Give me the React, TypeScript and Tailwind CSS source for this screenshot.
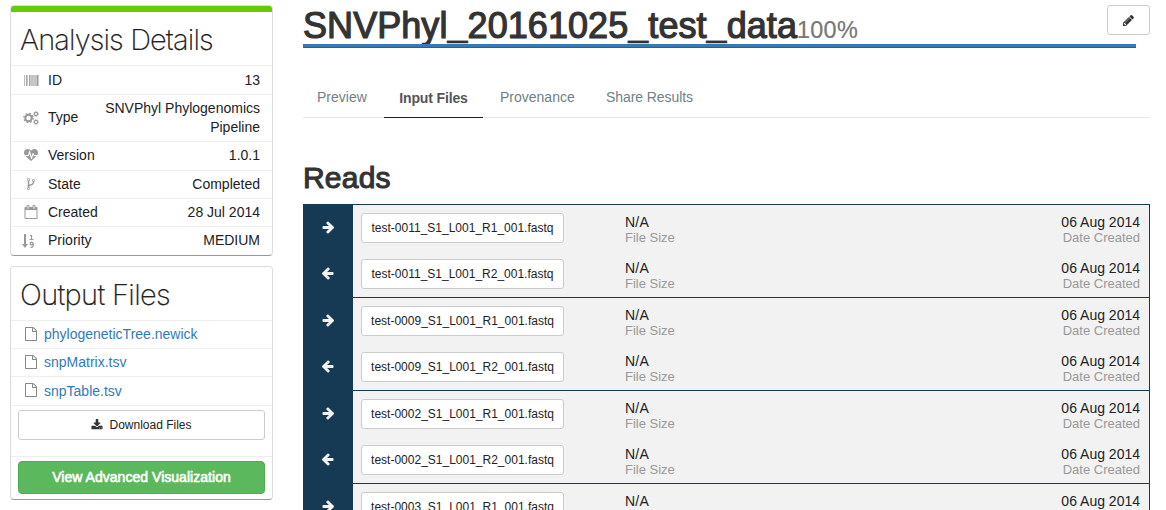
import React from "react";

const ICONS = {
  right:
    "M1664 960q0 54-37 91l-651 651q-39 37-91 37-51 0-90-37l-75-75q-38-38-38-91t38-91l293-293h-704q-52 0-84.500-37.500t-32.500-90.500v-128q0-53 32.500-90.500t84.500-37.500h704l-293-294q-38-36-38-90t38-90l75-75q38-38 90-38 53 0 91 38l651 651q37 35 37 90z",
  heart:
    "M1280 1024h305q-5 6-10 10.500t-9 7.500l-3 4-623 600q-18 18-44 18t-44-18l-624-602q-5-2-21-20h369q22 0 39.500-13.500t22.500-34.500l70-281 190 667q6 20 23 33t39 13q21 0 38-13t23-33l146-485 56 112q18 35 57 35zm512-428q0 145-103 300h-369l-111-221q-8-17-25.500-27t-36.500-8q-45 5-56 46l-129 430-196-686q-6-20-23.500-33t-39.500-13-39 13.500-22 34.500l-116 464h-423q-103-155-103-300 0-220 127-344t351-124q62 0 126.500 21.500t120 58 95.500 68.500 76 68q36-36 76-68t95.500-68.500 120-58 126.500-21.500q224 0 351 124t127 344z",
  fork:
    "M672 1472q0-40-28-68t-68-28-68 28-28 68 28 68 68 28 68-28 28-68zm0-1152q0-40-28-68t-68-28-68 28-28 68 28 68 68 28 68-28 28-68zm640 128q0-40-28-68t-68-28-68 28-28 68 28 68 68 28 68-28 28-68zm96 0q0 52-26 96.500t-70 69.500q-2 287-226 414-67 38-203 81-128 40-169.500 71t-41.500 100v26q44 25 70 69.500t26 96.500q0 80-56 136t-136 56-136-56-56-136q0-52 26-96.500t70-69.500v-820q-44-25-70-69.500t-26-96.500q0-80 56-136t136-56 136 56 56 136q0 52-26 96.500t-70 69.500v497q54-26 154-57 55-17 87.500-29.500t70.500-31 59-39.500 40.500-51 28-69.500 8.500-91.500q-44-25-70-69.500t-26-96.500q0-80 56-136t136-56 136 56 56 136z",
  calendar:
    "M192 1664h1408v-1024h-1408v1024zm384-1216v-288q0-14-9-23t-23-9h-64q-14 0-23 9t-9 23v288q0 14 9 23t23 9h64q14 0 23-9t9-23zm768 0v-288q0-14-9-23t-23-9h-64q-14 0-23 9t-9 23v288q0 14 9 23t23 9h64q14 0 23-9t9-23zm384-64v1280q0 52-38 90t-90 38h-1408q-52 0-90-38t-38-90v-1280q0-52 38-90t90-38h128v-96q0-66 47-113t113-47h64q66 0 113 47t47 113v96h384v-96q0-66 47-113t113-47h64q66 0 113 47t47 113v96h128q52 0 90 38t38 90z",
  file:
    "M1596 380q28 28 48 76t20 88v1152q0 40-28 68t-68 28h-1344q-40 0-68-28t-28-68v-1600q0-40 28-68t68-28h896q40 0 88 20t76 48zm-444-244v376h376q-10-29-22-41l-313-313q-12-12-41-22zm384 1528v-1024h-416q-40 0-68-28t-28-68v-416h-768v1536h1280z",
  download:
    "M1344 1344q0-26-19-45t-45-19-45 19-19 45 19 45 45 19 45-19 19-45zm256 0q0-26-19-45t-45-19-45 19-19 45 19 45 45 19 45-19 19-45zm128-224v320q0 40-28 68t-68 28h-1472q-40 0-68-28t-28-68v-320q0-40 28-68t68-28h465l135 136q58 56 136 56t136-56l136-136h464q40 0 68 28t28 68zm-325-569q17 41-14 70l-448 448q-18 19-45 19t-45-19l-448-448q-31-29-14-70 17-39 59-39h256v-448q0-26 19-45t45-19h256q26 0 45 19t19 45v448h256q42 0 59 39z",
  pencil:
    "M491 1536l91-91-235-235-91 91v107h128v128h107zm523-928q0-22-22-22-10 0-17 7l-542 542q-7 7-7 17 0 22 22 22 10 0 17-7l542-542q7-7 7-17zm-54-192l416 416-832 832h-416v-416zm683 96q0 53-37 90l-166 166-416-416 166-165q36-38 90-38 53 0 91 38l235 234q37 39 37 91z",
};

function Icon({ name, className }: { name: keyof typeof ICONS; className: string }) {
  return (
    <svg viewBox="0 0 1792 1792" fill="currentColor" className={className}>
      <path d={ICONS[name]} />
    </svg>
  );
}

function Barcode() {
  return (
    <svg width="16" height="11" viewBox="0 0 16 11">
      <rect x="1" width="1" height="11" fill="#bbb" />
      <rect x="3" width="1" height="11" fill="#aaa" />
      <rect x="4" width="1" height="11" fill="#ccc" />
      <rect x="6" width="1" height="11" fill="#aaa" />
      <rect x="7" width="7" height="11" fill="#c6c6c6" />
      <rect x="14" width="1" height="11" fill="#999" />
      <rect x="15" width="1" height="11" fill="#ccc" />
    </svg>
  );
}

function Gears() {
  return (
    <svg width="16" height="14" viewBox="0 0 16 14" fill="none" stroke="currentColor" className="mb-px">
      <circle cx="5.500" cy="7" r="3.200" strokeWidth="2" />
      <circle cx="5.500" cy="7" r="4.600" strokeWidth="1.400" strokeDasharray="1.800 1.813" />
      <circle cx="13" cy="3" r="1.600" strokeWidth="1.100" />
      <circle cx="13" cy="3" r="2.400" strokeWidth="0.900" strokeDasharray="0.900 0.985" />
      <circle cx="13" cy="11" r="1.600" strokeWidth="1.100" />
      <circle cx="13" cy="11" r="2.400" strokeWidth="0.900" strokeDasharray="0.900 0.985" />
    </svg>
  );
}

function SortNumeric() {
  return (
    <svg width="16" height="14" viewBox="0 0 16 14" fill="none" stroke="currentColor" className="mr-[2px] shrink-0">
      <path d="M3 0v12" strokeWidth="2" />
      <path d="M0 10h6l-3 4z" fill="currentColor" stroke="none" />
      <path d="M8 1.500h1.500v4M7.500 5.500h4" strokeWidth="1.200" />
      <circle cx="9.600" cy="9.500" r="1.400" strokeWidth="1.200" />
      <path d="M11.200 9.500v2q0 2-2.700 2" strokeWidth="1.200" />
    </svg>
  );
}

const details = [
  { label: "ID", value: "13", h: "h-[29px]", icon: <Barcode /> },
  { label: "Type", value: "SNVPhyl Phylogenomics Pipeline", h: "h-[47px]", icon: <Gears /> },
  { label: "Version", value: "1.0.1", h: "h-[29px] pb-[2px]", icon: <Icon name="heart" className="size-[14px]" /> },
  { label: "State", value: "Completed", h: "h-[28px]", icon: <Icon name="fork" className="mb-px size-[14px]" /> },
  { label: "Created", value: "28 Jul 2014", h: "h-[28px]", icon: <Icon name="calendar" className="mb-px size-[14px]" /> },
  { label: "Priority", value: "MEDIUM", h: "h-[28px]", icon: <SortNumeric /> },
];

const files = [
  { name: "phylogeneticTree.newick", h: "h-[28px]" },
  { name: "snpMatrix.tsv", h: "h-[28px]" },
  { name: "snpTable.tsv", h: "h-[29px]" },
];

const samples = ["0011", "0009", "0002", "0003"];

function Underscore() {
  return <span className="relative -top-[2px] [-webkit-text-stroke:0.3px_#333]">_</span>;
}

function ReadRow({ sample, dir }: { sample: string; dir: 1 | 2 }) {
  return (
    <div className="flex h-[46px] shrink-0 pt-2">
      <div className="flex w-[202px] shrink-0">
        <button className="h-[30px] w-[203px] shrink-0 rounded-[3px] border border-[#ccc] bg-white text-[12px] whitespace-nowrap">
          {`test-${sample}_S1_L001_R${dir}_001.fastq`}
        </button>
      </div>
      <div className="ml-[62px] flex-1">
        <div className="text-[14px] leading-[18px] tracking-[0.2px]">N/A</div>
        <div className="text-[13px] leading-[14px] text-[#999]">File Size</div>
      </div>
      <div className="text-right">
        <div className="text-[14px] leading-[18px]">06 Aug 2014</div>
        <div className="text-[13px] leading-[14px] text-[#999]">Date Created</div>
      </div>
    </div>
  );
}

export default function App() {
  return (
    <div className="flex h-[510px] w-[1166px] overflow-hidden bg-white pl-[10px] font-['Liberation_Sans',Arial,sans-serif] text-[14px] text-[#222]">
      <aside className="w-[263px] shrink-0 pt-[5px]">
        <section className="h-[251px] overflow-hidden rounded-[4px] border border-[#ddd] border-b-[#999]">
          <div className="h-[6px] bg-[#66cc00]" />
          <h2 className="h-[53px] pl-[9px] font-['Inter',sans-serif] text-[29px] leading-[55px] font-extralight tracking-[-0.88px] text-[#222] [-webkit-text-stroke:0.2px_#222]">
            Analysis Details
          </h2>
          {details.map((d) => (
            <div key={d.label} className={`flex items-center border-t border-[#eee] pr-[12px] pl-[12px] ${d.h}`}>
              <span className="flex w-[16px] shrink-0 justify-center text-[#999]">{d.icon}</span>
              <span className={d.label === "Type" ? "mb-[2px] ml-[9px] flex-1" : "ml-[9px] flex-1"}>{d.label}</span>
              <span className="w-[170px] text-right leading-[19px]">{d.value}</span>
            </div>
          ))}
        </section>

        <section className="mt-[10px] h-[234px] overflow-hidden rounded-[4px] border border-[#ddd] border-b-[#999]">
          <h2 className="h-[53px] pl-[9px] font-['Inter',sans-serif] text-[29px] leading-[55px] font-extralight tracking-[-0.68px] text-[#222] [-webkit-text-stroke:0.2px_#222]">
            Output Files
          </h2>
          {files.map((f) => (
            <div key={f.name} className={`flex items-center border-t border-[#eee] pl-[13px] ${f.h}`}>
              <Icon name="file" className="mb-[2px] size-[14px] text-[#888]" />
              <a className="ml-[6px] text-[#337ab7]">{f.name}</a>
            </div>
          ))}
          <div className="h-[51px] border-t border-[#eee] px-[7px] pt-[4px]">
            <button className="flex h-[30px] w-full items-center justify-center rounded-[3px] border border-[#ccc] text-[12px]">
              <Icon name="download" className="mr-[6px] mb-px size-[12px] text-[#333]" />
              Download Files
            </button>
          </div>
          <div className="border-t border-[#eee] px-[7px] pt-[4px]">
            <button className="block h-[33px] w-full rounded-[4px] border border-[#4cae4c] bg-[#5cb85c] text-[14px] tracking-[0.03px] text-white [-webkit-text-stroke:0.6px_white]">
              View Advanced Visualization
            </button>
          </div>
        </section>
      </aside>

      <main className="ml-[30px] flex w-[847px] shrink-0 flex-col">
        <header className="flex h-[48px] justify-between">
          <div className="w-[833px] shrink-0">
            <h1 className="flex h-[44px] items-baseline text-[36px] leading-[52px] whitespace-nowrap text-[#333]">
              <span className="tracking-[0.06px] [-webkit-text-stroke:1.2px_#333]">
                SNVPhyl<Underscore />20161025<Underscore />test<Underscore />data
              </span>
              <span className="text-[23.4px] tracking-[0.3px] text-[#777] [-webkit-text-stroke:0.2px_#777]">100%</span>
            </h1>
            <div className="relative h-[4px] border-b border-[#286090] bg-[#337ab7]" />
          </div>
          <button className="mt-[5px] -ml-[29px] flex h-[30px] w-[43px] shrink-0 items-center justify-center rounded-[3px] border border-[#ccc] bg-white">
            <Icon name="pencil" className="mr-px size-[13px] text-[#333]" />
          </button>
        </header>

        <nav className="mt-[29px] flex h-[41px] shrink-0 border-b border-[#e7e7e7] leading-[40px] text-[#6f7f86]">
          <a className="w-[81px] pl-[14px]">Preview</a>
          <a className="h-[41px] w-[99px] border-b border-[#222] text-center leading-[42px] font-bold tracking-[-0.15px] text-[#555]">
            Input Files
          </a>
          <a className="ml-[17px] w-[106px]">Provenance</a>
          <a className="tracking-[-0.08px]">Share Results</a>
        </nav>

        <h2 className="mt-[40px] h-[46px] shrink-0 text-[30px] leading-[40px] tracking-[0.2px] text-[#333] [-webkit-text-stroke:1.1px_#333]">
          Reads
        </h2>

        <div className="border-r border-[#163a54]">
          {samples.map((s) => (
            <div key={s} className="flex h-[93px]">
              <div className="flex w-[50px] flex-col items-center bg-[#163a54] text-[#f2f2f2]">
                <Icon name="right" className="mt-[16px] mr-px size-[14px]" />
                <Icon name="right" className="mt-[33px] size-[14px] rotate-180" />
              </div>
              <div className="flex-1 border-t border-[#163a54] bg-[#f2f2f2] pr-[9px] pl-[8px]">
                <ReadRow sample={s} dir={1} />
                <ReadRow sample={s} dir={2} />
              </div>
            </div>
          ))}
        </div>
      </main>
    </div>
  );
}
